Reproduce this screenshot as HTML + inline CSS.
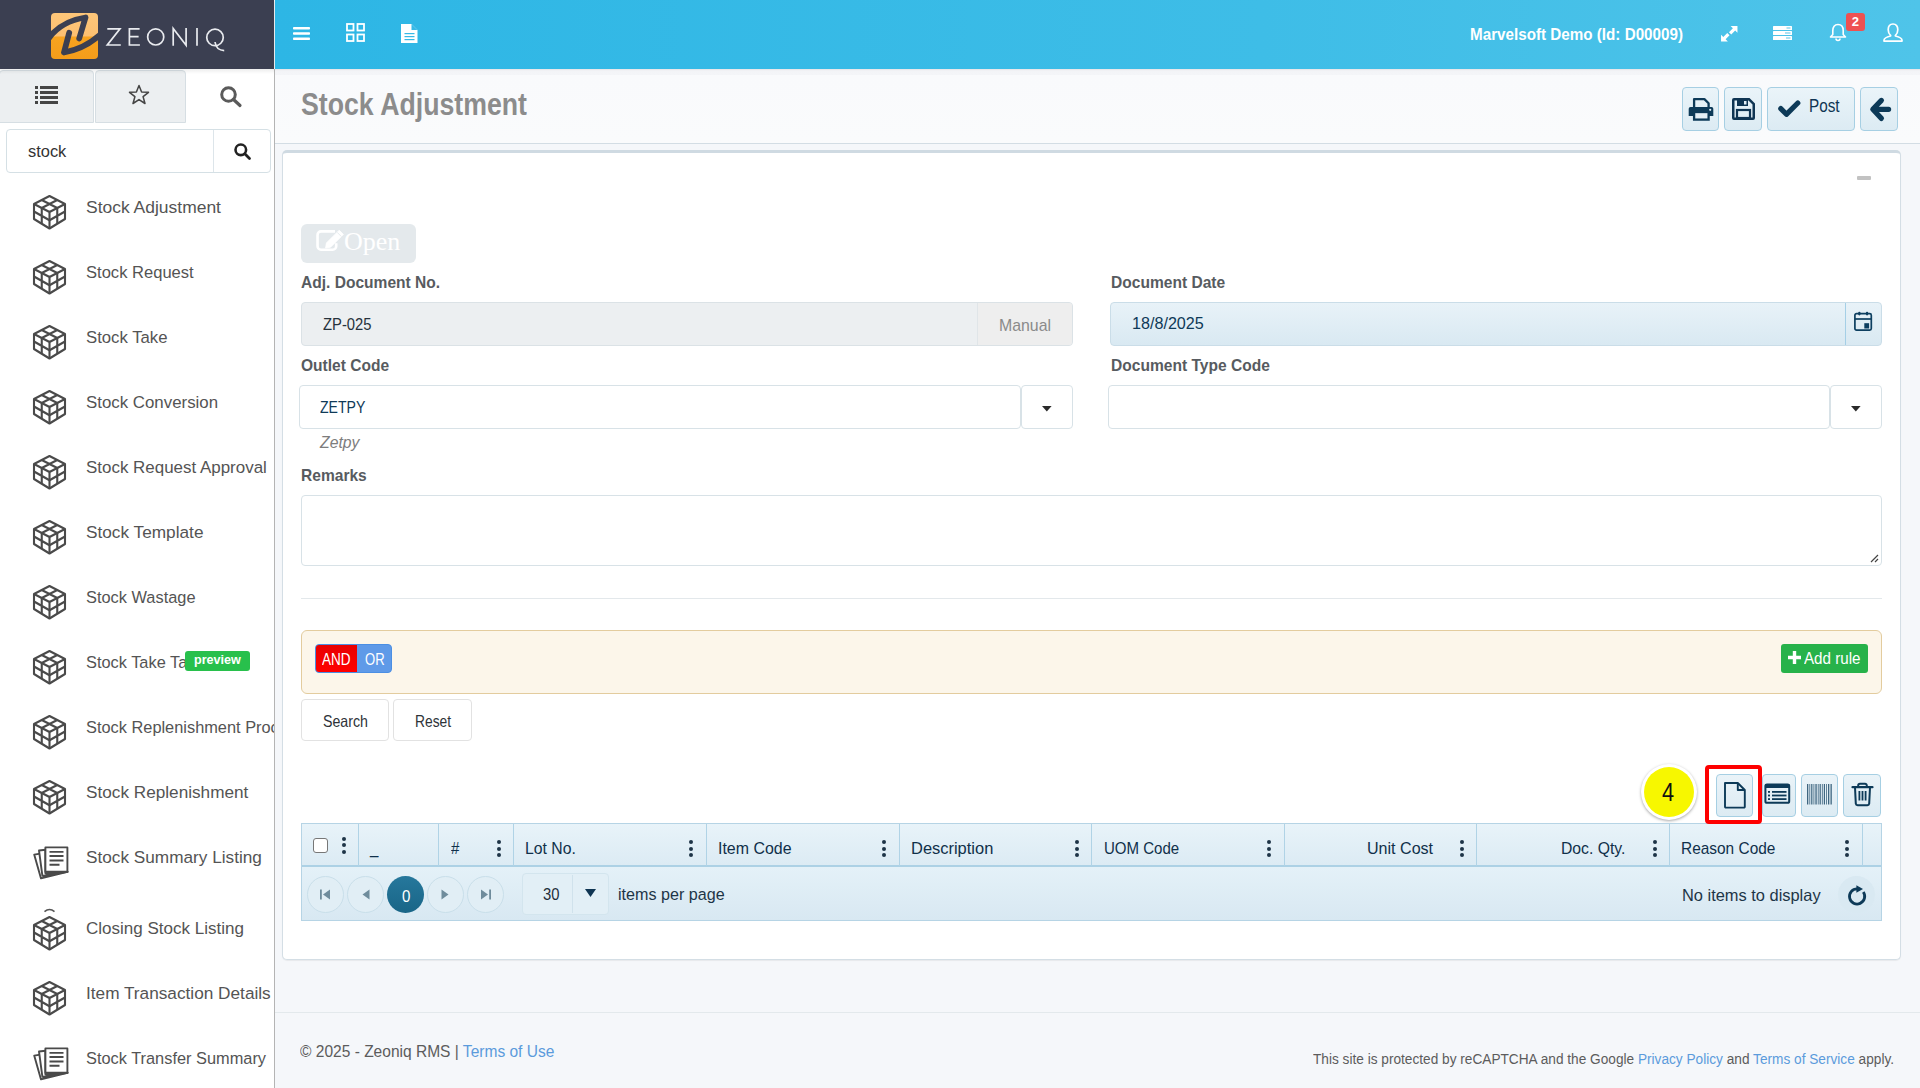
<!DOCTYPE html>
<html><head><meta charset="utf-8">
<style>
*{box-sizing:border-box;margin:0;padding:0}
html,body{width:1920px;height:1088px;overflow:hidden;background:#f5f7fa;font-family:"Liberation Sans",sans-serif;color:#333}
.a{position:absolute}
.t{position:absolute;line-height:1;white-space:nowrap}
svg{position:absolute;overflow:visible}
#side{position:absolute;left:0;top:0;width:274px;height:1088px;background:#fff;overflow:hidden}
#sideline{position:absolute;left:274px;top:69px;width:1px;height:1019px;background:#b4b4b4}
#logo{position:absolute;left:0;top:0;width:275px;height:69px;background:#3b3f51;z-index:3}
.tab{position:absolute;top:69.5px;height:53.5px;background:#eceff1;border:1px solid #d6dee3;border-radius:4px 4px 0 0}
.mi{position:absolute;left:86px;font-size:17.5px;color:#545454}
#top{position:absolute;left:275px;top:0;width:1645px;height:69px;background:linear-gradient(90deg,#2db6e5 0%,#3ebde7 60%,#4fc4e9 100%);box-shadow:0 1px 3px rgba(0,0,0,.15)}
#tbar{position:absolute;left:275px;top:69px;width:1645px;height:75px;background:linear-gradient(#e4e1e4 0,#eeeef1 1px,#f3f4f7 2px,#f4f5f8 6px,#f9fafc 6.5px,#fafbfc 100%);border-bottom:1px solid #d3dde4}
.hb{position:absolute;top:87px;height:44px;background:linear-gradient(#eaf4f9,#dcebf3);border:1px solid #a6cfe3;border-radius:4px}
#card{position:absolute;left:282px;top:150px;width:1619px;height:810px;box-shadow:0 1px 1px rgba(0,0,0,.06);background:#fff;border:1px solid #d4dee5;border-top:3px solid #cfdae2;border-radius:5px}
.lbl{position:absolute;font-size:15.5px;font-weight:700;color:#575b60;line-height:1;white-space:nowrap}
.inp{position:absolute;height:44px;border:1px solid #d8e2e7;border-radius:4px;background:#fff}
.gh{position:absolute;top:824px;height:43px;border-right:1px solid #b9d6e6}
.dots{position:absolute;width:4px;height:18px}
.dots i{position:absolute;left:0;width:4px;height:4px;border-radius:2px;background:#1e3447}
.ght{position:absolute;font-size:16px;color:#2b3b47;line-height:1;white-space:nowrap}
.pc{position:absolute;top:876px;width:37px;height:37px;border-radius:50%;border:1px solid #c9dfea;background:#e1eef5}
.tb{position:absolute;top:774px;height:42.5px;border:1px solid #a6cfe3;border-radius:4px;background:linear-gradient(#eaf3f8,#dcebf3)}
.ft{position:absolute;line-height:1;white-space:nowrap;color:#5c5c5c}
.lnk{color:#5b9bdc}
</style></head><body>

<!-- SIDEBAR -->
<div id="side">
  <div id="logo">
    <svg style="left:51px;top:13px" width="47" height="46" viewBox="0 0 47 46">
      <defs><linearGradient id="lg" x1="0" y1="0" x2="0" y2="1"><stop offset="0" stop-color="#fdc679"/><stop offset=".49" stop-color="#fcc072"/><stop offset=".53" stop-color="#f7a320"/><stop offset="1" stop-color="#f59d1a"/></linearGradient><clipPath id="lc"><rect x="0" y="0" width="47" height="46" rx="4"/></clipPath></defs>
      <rect x="0" y="0" width="47" height="46" rx="4" fill="url(#lg)"/>
      <g clip-path="url(#lc)" fill="none" stroke="#3b3f51" stroke-width="5.8" stroke-linejoin="round" stroke-linecap="round"><path d="M-2 25 C6 14 18 7 34.5 4.5 L28.2 25.5"/><path d="M18.2 19.8 L13 39.5 C25 37.5 38 32 50 21"/></g>
    </svg>
    <svg style="left:0;top:0" width="274" height="69" viewBox="0 0 274 69"><g fill="none" stroke="#e9ebef" stroke-width="1.7"><path d="M107.3 28.9 H120 L107.3 45 H120.8"/><path d="M139.6 28.9 H129.4 V45 H139.9 M129.4 36.6 H138.6"/><circle cx="155.7" cy="36.95" r="8.05"/><path d="M173.2 45.8 V28.6 L186.1 45.3 V28.1"/><path d="M197 28.1 V45.8"/><circle cx="215" cy="37.4" r="8.25"/><path d="M215 42 Q216.2 50.3 224.2 50.6"/></g></svg>
  </div>
  <div class="tab" style="left:-1px;width:94.5px"></div>
  <div class="tab" style="left:94.5px;width:91.5px"></div>
  <!-- list icon -->
  <svg style="left:35px;top:86px" width="23" height="18" viewBox="0 0 23 18"><g fill="#454545"><rect x="0" y="0" width="3" height="3"/><rect x="5" y="0" width="18" height="3"/><rect x="0" y="5" width="3" height="3"/><rect x="5" y="5" width="18" height="3"/><rect x="0" y="10" width="3" height="3"/><rect x="5" y="10" width="18" height="3"/><rect x="0" y="15" width="3" height="3"/><rect x="5" y="15" width="18" height="3"/></g></svg>
  <!-- star -->
  <svg style="left:128px;top:84px" width="22" height="22" viewBox="0 0 22 22"><path d="M11 1.5 L13.6 8 L20.5 8.3 L15.1 12.7 L17 19.5 L11 15.6 L5 19.5 L6.9 12.7 L1.5 8.3 L8.4 8 Z" fill="none" stroke="#454545" stroke-width="1.5" stroke-linejoin="round"/></svg>
  <!-- search tab icon -->
  <svg style="left:220px;top:86px" width="22" height="21" viewBox="0 0 22 21"><circle cx="8.5" cy="8.5" r="6.8" fill="none" stroke="#5a5a5a" stroke-width="3"/><path d="M13.5 13.5 L20 19.5" stroke="#5a5a5a" stroke-width="3.2" stroke-linecap="round"/></svg>
  <!-- search input -->
  <div class="a" style="left:6px;top:129px;width:265px;height:44px;border:1px solid #d5e0e5;border-radius:4px;background:#fff"></div>
  <div class="a" style="left:213px;top:130px;width:1px;height:42px;background:#dde5ea"></div>
  <svg style="left:234px;top:143px" width="17" height="17" viewBox="0 0 17 17"><circle cx="6.8" cy="6.8" r="5.3" fill="none" stroke="#222" stroke-width="2.6"/><path d="M10.8 10.8 L15.5 15.5" stroke="#222" stroke-width="2.8" stroke-linecap="round"/></svg>
  <svg style="left:33px;top:194.9px" width="33" height="35" viewBox="0 0 33 35"><g fill="none" stroke="#4a4a4a" stroke-width="2.1" stroke-linejoin="round"><path d="M16.5 1 L32 9 V24 L16.5 33.5 L1 24 V9 Z"/><path d="M1 9 L16.5 17 L32 9 M16.5 17 V33.5"/><path d="M8.75 5 L24.25 13 M24.25 5 L8.75 13"/><path d="M8.75 13 V28.75 M1 16.5 L16.5 25.25"/><path d="M24.25 13 V28.75 M32 16.5 L16.5 25.25"/></g></svg>
<svg style="left:33px;top:259.9px" width="33" height="35" viewBox="0 0 33 35"><g fill="none" stroke="#4a4a4a" stroke-width="2.1" stroke-linejoin="round"><path d="M16.5 1 L32 9 V24 L16.5 33.5 L1 24 V9 Z"/><path d="M1 9 L16.5 17 L32 9 M16.5 17 V33.5"/><path d="M8.75 5 L24.25 13 M24.25 5 L8.75 13"/><path d="M8.75 13 V28.75 M1 16.5 L16.5 25.25"/><path d="M24.25 13 V28.75 M32 16.5 L16.5 25.25"/></g></svg>
<svg style="left:33px;top:324.9px" width="33" height="35" viewBox="0 0 33 35"><g fill="none" stroke="#4a4a4a" stroke-width="2.1" stroke-linejoin="round"><path d="M16.5 1 L32 9 V24 L16.5 33.5 L1 24 V9 Z"/><path d="M1 9 L16.5 17 L32 9 M16.5 17 V33.5"/><path d="M8.75 5 L24.25 13 M24.25 5 L8.75 13"/><path d="M8.75 13 V28.75 M1 16.5 L16.5 25.25"/><path d="M24.25 13 V28.75 M32 16.5 L16.5 25.25"/></g></svg>
<svg style="left:33px;top:389.9px" width="33" height="35" viewBox="0 0 33 35"><g fill="none" stroke="#4a4a4a" stroke-width="2.1" stroke-linejoin="round"><path d="M16.5 1 L32 9 V24 L16.5 33.5 L1 24 V9 Z"/><path d="M1 9 L16.5 17 L32 9 M16.5 17 V33.5"/><path d="M8.75 5 L24.25 13 M24.25 5 L8.75 13"/><path d="M8.75 13 V28.75 M1 16.5 L16.5 25.25"/><path d="M24.25 13 V28.75 M32 16.5 L16.5 25.25"/></g></svg>
<svg style="left:33px;top:454.9px" width="33" height="35" viewBox="0 0 33 35"><g fill="none" stroke="#4a4a4a" stroke-width="2.1" stroke-linejoin="round"><path d="M16.5 1 L32 9 V24 L16.5 33.5 L1 24 V9 Z"/><path d="M1 9 L16.5 17 L32 9 M16.5 17 V33.5"/><path d="M8.75 5 L24.25 13 M24.25 5 L8.75 13"/><path d="M8.75 13 V28.75 M1 16.5 L16.5 25.25"/><path d="M24.25 13 V28.75 M32 16.5 L16.5 25.25"/></g></svg>
<svg style="left:33px;top:519.9px" width="33" height="35" viewBox="0 0 33 35"><g fill="none" stroke="#4a4a4a" stroke-width="2.1" stroke-linejoin="round"><path d="M16.5 1 L32 9 V24 L16.5 33.5 L1 24 V9 Z"/><path d="M1 9 L16.5 17 L32 9 M16.5 17 V33.5"/><path d="M8.75 5 L24.25 13 M24.25 5 L8.75 13"/><path d="M8.75 13 V28.75 M1 16.5 L16.5 25.25"/><path d="M24.25 13 V28.75 M32 16.5 L16.5 25.25"/></g></svg>
<svg style="left:33px;top:584.9px" width="33" height="35" viewBox="0 0 33 35"><g fill="none" stroke="#4a4a4a" stroke-width="2.1" stroke-linejoin="round"><path d="M16.5 1 L32 9 V24 L16.5 33.5 L1 24 V9 Z"/><path d="M1 9 L16.5 17 L32 9 M16.5 17 V33.5"/><path d="M8.75 5 L24.25 13 M24.25 5 L8.75 13"/><path d="M8.75 13 V28.75 M1 16.5 L16.5 25.25"/><path d="M24.25 13 V28.75 M32 16.5 L16.5 25.25"/></g></svg>
<svg style="left:33px;top:649.9px" width="33" height="35" viewBox="0 0 33 35"><g fill="none" stroke="#4a4a4a" stroke-width="2.1" stroke-linejoin="round"><path d="M16.5 1 L32 9 V24 L16.5 33.5 L1 24 V9 Z"/><path d="M1 9 L16.5 17 L32 9 M16.5 17 V33.5"/><path d="M8.75 5 L24.25 13 M24.25 5 L8.75 13"/><path d="M8.75 13 V28.75 M1 16.5 L16.5 25.25"/><path d="M24.25 13 V28.75 M32 16.5 L16.5 25.25"/></g></svg>
<svg style="left:33px;top:714.9px" width="33" height="35" viewBox="0 0 33 35"><g fill="none" stroke="#4a4a4a" stroke-width="2.1" stroke-linejoin="round"><path d="M16.5 1 L32 9 V24 L16.5 33.5 L1 24 V9 Z"/><path d="M1 9 L16.5 17 L32 9 M16.5 17 V33.5"/><path d="M8.75 5 L24.25 13 M24.25 5 L8.75 13"/><path d="M8.75 13 V28.75 M1 16.5 L16.5 25.25"/><path d="M24.25 13 V28.75 M32 16.5 L16.5 25.25"/></g></svg>
<svg style="left:33px;top:779.9px" width="33" height="35" viewBox="0 0 33 35"><g fill="none" stroke="#4a4a4a" stroke-width="2.1" stroke-linejoin="round"><path d="M16.5 1 L32 9 V24 L16.5 33.5 L1 24 V9 Z"/><path d="M1 9 L16.5 17 L32 9 M16.5 17 V33.5"/><path d="M8.75 5 L24.25 13 M24.25 5 L8.75 13"/><path d="M8.75 13 V28.75 M1 16.5 L16.5 25.25"/><path d="M24.25 13 V28.75 M32 16.5 L16.5 25.25"/></g></svg>
<svg style="left:33px;top:845.9px" width="36" height="34" viewBox="0 0 36 34"><g fill="#fff" stroke="#4a4a4a" stroke-width="1.9" stroke-linejoin="round"><path d="M1.2 8.6 L7.2 7.6 L10.5 30 L34.5 25.8 L8 32.4 Z"/><path d="M6 4.5 L12.4 3.7 V27.2 L34.5 25.8 L9.4 29.9 Z"/><rect x="12.4" y="1.4" width="22" height="24.4"/></g><g stroke="#4a4a4a" stroke-width="1.9"><path d="M16.5 5.9 H30.5 M16.5 10 H30.5 M16.5 14.5 H30.5 M16.5 18.8 H26.5"/></g></svg>
<svg style="left:33px;top:915.9px" width="33" height="35" viewBox="0 0 33 35"><g fill="none" stroke="#4a4a4a" stroke-width="2.1" stroke-linejoin="round"><path d="M16.5 1 L32 9 V24 L16.5 33.5 L1 24 V9 Z"/><path d="M1 9 L16.5 17 L32 9 M16.5 17 V33.5"/><path d="M8.75 5 L24.25 13 M24.25 5 L8.75 13"/><path d="M8.75 13 V28.75 M1 16.5 L16.5 25.25"/><path d="M24.25 13 V28.75 M32 16.5 L16.5 25.25"/></g></svg>
<svg style="left:33px;top:980.9px" width="33" height="35" viewBox="0 0 33 35"><g fill="none" stroke="#4a4a4a" stroke-width="2.1" stroke-linejoin="round"><path d="M16.5 1 L32 9 V24 L16.5 33.5 L1 24 V9 Z"/><path d="M1 9 L16.5 17 L32 9 M16.5 17 V33.5"/><path d="M8.75 5 L24.25 13 M24.25 5 L8.75 13"/><path d="M8.75 13 V28.75 M1 16.5 L16.5 25.25"/><path d="M24.25 13 V28.75 M32 16.5 L16.5 25.25"/></g></svg>
<svg style="left:33px;top:1046.9px" width="36" height="34" viewBox="0 0 36 34"><g fill="#fff" stroke="#4a4a4a" stroke-width="1.9" stroke-linejoin="round"><path d="M1.2 8.6 L7.2 7.6 L10.5 30 L34.5 25.8 L8 32.4 Z"/><path d="M6 4.5 L12.4 3.7 V27.2 L34.5 25.8 L9.4 29.9 Z"/><rect x="12.4" y="1.4" width="22" height="24.4"/></g><g stroke="#4a4a4a" stroke-width="1.9"><path d="M16.5 5.9 H30.5 M16.5 10 H30.5 M16.5 14.5 H30.5 M16.5 18.8 H26.5"/></g></svg>
<div class="a" style="left:185px;top:651px;width:65px;height:20px;background:#28c04c;border-radius:3px;z-index:2"></div>
<svg style="left:44px;top:908px" width="11" height="4" viewBox="0 0 11 4"><path d="M0.5 3.6 Q5.5 -0.6 10.5 3.6" fill="none" stroke="#555" stroke-width="1.6"/></svg>
<div class="t" style="top:199.98px;font-size:16.80px;font-weight:400;color:#545454;z-index:1;left:86.00px;transform-origin:0 0;transform:scaleX(1.0410);">Stock Adjustment</div>
<div class="t" style="top:264.98px;font-size:16.80px;font-weight:400;color:#545454;z-index:1;left:86.00px;transform-origin:0 0;transform:scaleX(0.9867);">Stock Request</div>
<div class="t" style="top:329.98px;font-size:16.80px;font-weight:400;color:#545454;z-index:1;left:86.00px;transform-origin:0 0;transform:scaleX(0.9968);">Stock Take</div>
<div class="t" style="top:394.98px;font-size:16.80px;font-weight:400;color:#545454;z-index:1;left:86.00px;transform-origin:0 0;transform:scaleX(1.0042);">Stock Conversion</div>
<div class="t" style="top:459.98px;font-size:16.80px;font-weight:400;color:#545454;z-index:1;left:86.00px;transform-origin:0 0;transform:scaleX(1.0096);">Stock Request Approval</div>
<div class="t" style="top:524.98px;font-size:16.80px;font-weight:400;color:#545454;z-index:1;left:86.00px;transform-origin:0 0;transform:scaleX(1.0268);">Stock Template</div>
<div class="t" style="top:589.98px;font-size:16.80px;font-weight:400;color:#545454;z-index:1;left:86.00px;transform-origin:0 0;transform:scaleX(0.9756);">Stock Wastage</div>
<div class="t" style="top:654.98px;font-size:16.80px;font-weight:400;color:#545454;z-index:1;left:86.00px;transform-origin:0 0;transform:scaleX(0.9750);">Stock Take Tag</div>
<div class="t" style="top:719.98px;font-size:16.80px;font-weight:400;color:#545454;z-index:1;left:86.00px;transform-origin:0 0;transform:scaleX(0.9750);">Stock Replenishment Process</div>
<div class="t" style="top:784.98px;font-size:16.80px;font-weight:400;color:#545454;z-index:1;left:86.00px;transform-origin:0 0;transform:scaleX(1.0238);">Stock Replenishment</div>
<div class="t" style="top:849.98px;font-size:16.80px;font-weight:400;color:#545454;z-index:1;left:86.00px;transform-origin:0 0;transform:scaleX(1.0252);">Stock Summary Listing</div>
<div class="t" style="top:920.98px;font-size:16.80px;font-weight:400;color:#545454;z-index:1;left:86.00px;transform-origin:0 0;transform:scaleX(1.0146);">Closing Stock Listing</div>
<div class="t" style="top:985.98px;font-size:16.80px;font-weight:400;color:#545454;z-index:1;left:86.00px;transform-origin:0 0;transform:scaleX(1.0262);">Item Transaction Details</div>
<div class="t" style="top:1050.98px;font-size:16.80px;font-weight:400;color:#545454;z-index:1;left:86.00px;transform-origin:0 0;transform:scaleX(0.9750);">Stock Transfer Summary</div>
<div class="t" style="top:654.42px;font-size:12.50px;font-weight:700;color:#fff;z-index:3;left:193.90px;transform-origin:0 0;transform:scaleX(1.0072);">preview</div>
</div>

<div id="sideline"></div>
<div class="a" style="left:0;top:69px;width:274px;height:5px;background:linear-gradient(rgba(0,0,0,.07),rgba(0,0,0,0));z-index:2"></div>
<!-- TOP BAR -->
<div id="top"></div>
<!-- hamburger -->
<svg style="left:293px;top:27px" width="17" height="13" viewBox="0 0 17 13"><g fill="#fff"><rect x="0" y="0" width="17" height="2.6" rx=".8"/><rect x="0" y="5.2" width="17" height="2.6" rx=".8"/><rect x="0" y="10.4" width="17" height="2.6" rx=".8"/></g></svg>
<!-- grid -->
<svg style="left:346px;top:23px" width="19" height="19" viewBox="0 0 19 19"><g fill="none" stroke="#fff" stroke-width="1.8"><rect x="1" y="1" width="6.5" height="6.5"/><rect x="11.5" y="1" width="6.5" height="6.5"/><rect x="1" y="11.5" width="6.5" height="6.5"/><rect x="11.5" y="11.5" width="6.5" height="6.5"/></g></svg>
<!-- file -->
<svg style="left:401px;top:24px" width="17" height="19" viewBox="0 0 17 19"><path d="M0 0 H10.5 L16.5 6 V19 H0 Z" fill="#fff"/><path d="M10.5 0 V6 H16.5" fill="#36b9e6"/><g fill="#36b9e6"><rect x="3.5" y="9" width="10" height="1.2"/><rect x="3.5" y="12" width="10" height="1.2"/><rect x="3.5" y="15" width="10" height="1.2"/></g></svg>

<!-- expand -->
<svg style="left:1721px;top:26px" width="16.5" height="15.5" viewBox="0 0 18 17"><g fill="#fff"><path d="M10.5 0 H18 V7.5 L15.5 5 L11.2 9.3 L8.7 6.8 L13 2.5 Z"/><path d="M7.5 17 H0 V9.5 L2.5 12 L6.8 7.7 L9.3 10.2 L5 14.5 Z"/></g></svg>
<!-- server -->
<svg style="left:1773px;top:26px" width="19" height="14" viewBox="0 0 19 14"><g fill="#fff"><rect x="0" y="0" width="19" height="4" rx=".6"/><rect x="0" y="5" width="19" height="4" rx=".6"/><rect x="0" y="10" width="19" height="4" rx=".6"/></g><g fill="#5cc6ea"><rect x="13.5" y="1.5" width="4" height="1"/><rect x="12" y="6.5" width="5.5" height="1"/><rect x="13" y="11.5" width="4.5" height="1"/></g></svg>
<!-- bell -->
<svg style="left:1829px;top:23px" width="18" height="18" viewBox="0 0 18 18"><path d="M9 1.5 C5.5 1.5 3.8 4 3.8 7.5 V11.5 L1.5 14 H16.5 L14.2 11.5 V7.5 C14.2 4 12.5 1.5 9 1.5 Z" fill="none" stroke="#fff" stroke-width="1.6" stroke-linejoin="round"/><path d="M7 15.5 A2 2 0 0 0 11 15.5" fill="none" stroke="#fff" stroke-width="1.6"/></svg>
<div class="a" style="left:1846px;top:13px;width:19px;height:18px;background:#ee5151;border-radius:3px"></div>
<!-- user -->
<svg style="left:1883px;top:23px" width="20" height="19" viewBox="0 0 20 19"><path d="M10 1 C6.6 1 5.2 3.8 5.2 6.8 C5.2 9.2 6.3 11.3 7.6 12.3 V13 C4 13.9 1 15.3 1 17.2 V18.1 H19 V17.2 C19 15.3 16 13.9 12.4 13 V12.3 C13.7 11.3 14.8 9.2 14.8 6.8 C14.8 3.8 13.4 1 10 1 Z" fill="none" stroke="#fff" stroke-width="1.7" stroke-linejoin="round"/></svg>

<!-- TITLE BAR -->
<div id="tbar"></div>
<div class="hb" style="left:1682px;width:37px"></div>
<div class="hb" style="left:1724px;width:38px"></div>
<div class="hb" style="left:1767px;width:88px"></div>
<div class="hb" style="left:1860px;width:38px"></div>
<!-- print -->
<svg style="left:1688px;top:97px" width="26" height="24" viewBox="0 0 26 24"><path d="M6.1 12 V2.1 H16.4 L20.6 6.2 V12" fill="none" stroke="#0d3a58" stroke-width="2.3" stroke-linejoin="round"/><path d="M2.5 10 H23.5 A1.8 1.8 0 0 1 25.3 11.8 V19 H0.7 V11.8 A1.8 1.8 0 0 1 2.5 10 Z" fill="#0d3a58"/><rect x="6.1" y="15" width="14.5" height="7.6" fill="#e4eff6" stroke="#0d3a58" stroke-width="2.3"/><circle cx="22.2" cy="12.8" r="1.1" fill="#e4eff6"/></svg>
<!-- save -->
<svg style="left:1732px;top:98px" width="23" height="22" viewBox="0 0 23 22"><path d="M0 2 A2 2 0 0 1 2 0 H17.5 L23 5.5 V20 A2 2 0 0 1 21 22 H2 A2 2 0 0 1 0 20 Z M2.5 2.5 V19.5 H20.5 V6.5 L16.5 2.5 Z" fill="#0f3553" fill-rule="evenodd"/><rect x="5" y="2" width="11" height="6" fill="#0f3553"/><rect x="12" y="3" width="2.5" height="3.5" fill="#e3eff6"/><rect x="5" y="12" width="13" height="8" fill="none" stroke="#0f3553" stroke-width="2.2"/></svg>
<!-- check -->
<svg style="left:1770px;top:95px" width="36" height="30" viewBox="0 0 36 30"><path d="M10.8 13.6 L16.4 19.3 L27.8 8" fill="none" stroke="#0d3a58" stroke-width="5.2" stroke-linecap="round" stroke-linejoin="round"/></svg>
<!-- back -->
<svg style="left:1860px;top:90px" width="40" height="40" viewBox="0 0 40 40"><path d="M28.6 19.3 H13 M21.4 10.4 L12.8 19.3 L21.4 28.4" fill="none" stroke="#0d3a58" stroke-width="5.2" stroke-linecap="round" stroke-linejoin="round"/></svg>

<!-- CARD -->
<div id="card"></div>
<div class="a" style="left:1857px;top:176px;width:14px;height:4px;background:#c2c2c2;border-radius:1px"></div>

<div class="a" style="left:301px;top:224px;width:115px;height:39px;background:#e4e9ec;border-radius:6px"></div>
<svg style="left:315px;top:229px" width="31" height="24" viewBox="0 0 31 24"><path d="M20 2.4 H6 A3.5 3.5 0 0 0 2.55 5.9 V17.2 A3.5 3.5 0 0 0 6 20.7 H17.7 A3.5 3.5 0 0 0 21.2 17.2 V14.2" fill="none" stroke="#fff" stroke-width="2.6"/><path d="M10.6 19 L11.4 14 L24.2 1.2 L28.4 5.4 L15.6 18.2 Z" fill="#fff" stroke="#fff" stroke-width="0.8" stroke-linejoin="round"/><path d="M22.1 3.3 L26.3 7.5" stroke="#e4e9ec" stroke-width="0.9"/></svg>

<div class="a" style="left:301px;top:302px;width:772px;height:44px;background:#eceff1;border:1px solid #dbe2e6;border-radius:4px"></div>
<div class="a" style="left:977px;top:303px;width:1px;height:42px;background:#e0e5e8"></div>
<div class="a" style="left:978px;top:303px;width:94px;height:42px;background:#eeeeee;border-radius:0 3px 3px 0"></div>

<div class="a" style="left:1110px;top:302px;width:772px;height:44px;background:linear-gradient(#e8f2f8,#d9e9f2);border:1px solid #cadde8;border-radius:4px"></div>
<div class="a" style="left:1845px;top:303px;width:1px;height:42px;background:#a5cfe6"></div>
<svg style="left:1853px;top:311px" width="20" height="21" viewBox="0 0 20 21"><rect x="1.9" y="2.7" width="16.4" height="16.4" rx="1.6" fill="none" stroke="#0d3f60" stroke-width="1.7"/><path d="M1.9 8 H18.3" stroke="#0d3f60" stroke-width="1.7"/><rect x="5.2" y="0.8" width="2.3" height="3.6" rx="1.1" fill="#0d3f60"/><rect x="12.9" y="0.8" width="2.3" height="3.6" rx="1.1" fill="#0d3f60"/><rect x="11.3" y="12.2" width="4.8" height="5.3" fill="#0d3f60"/></svg>

<div class="inp" style="left:299px;top:385px;width:722px;height:44px"></div>
<div class="inp" style="left:1021px;top:385px;width:52px;height:44px"></div>
<svg style="left:1042px;top:405.5px" width="10" height="6" viewBox="0 0 10 6"><path d="M0 0 H9.6 L4.8 5.4 Z" fill="#2a2a2a"/></svg>

<div class="inp" style="left:1108px;top:385px;width:722px;height:44px"></div>
<div class="inp" style="left:1830px;top:385px;width:52px;height:44px"></div>
<svg style="left:1851px;top:405.5px" width="10" height="6" viewBox="0 0 10 6"><path d="M0 0 H9.6 L4.8 5.4 Z" fill="#2a2a2a"/></svg>

<div class="inp" style="left:301px;top:495px;width:1581px;height:71px"></div>
<svg style="left:1869px;top:553px" width="10" height="10" viewBox="0 0 10 10"><path d="M9 2 L2 9 M9 6 L6 9" stroke="#444" stroke-width="1.2"/></svg>

<div class="a" style="left:301px;top:598px;width:1581px;height:1px;background:#e3e8eb"></div>

<!-- filter builder -->
<div class="a" style="left:301px;top:630px;width:1581px;height:64px;background:#fcf6ea;border:1px solid #e3cc9e;border-radius:6px"></div>
<div class="a" style="left:315px;top:644px;width:77px;height:29px;background:#5f9ae8;border-radius:4px;border:1px solid #4b8fe4;overflow:hidden"><div class="a" style="left:0;top:0;width:41px;height:27px;background:linear-gradient(#e80000,#ff0000)"></div></div>

<div class="a" style="left:1781px;top:644px;width:87px;height:29px;background:#27b24a;border-radius:3px"></div>
<svg style="left:1788px;top:651px" width="13" height="13" viewBox="0 0 13 13"><path d="M4.8 0 H8.2 V4.8 H13 V8.2 H8.2 V13 H4.8 V8.2 H0 V4.8 H4.8 Z" fill="#fff"/></svg>

<div class="a" style="left:301px;top:699px;width:88px;height:42px;background:#fff;border:1px solid #e2e2e2;border-radius:4px"></div>
<div class="a" style="left:393px;top:699px;width:79px;height:42px;background:#fff;border:1px solid #e2e2e2;border-radius:4px"></div>

<!-- toolbar -->
<div class="a" style="left:1641px;top:764px;width:56px;height:56px;border-radius:50%;background:#fff;box-shadow:0 1px 3px rgba(0,0,0,.35)"></div>
<div class="a" style="left:1644px;top:767px;width:50px;height:50px;border-radius:50%;background:#f7f700"></div>
<div class="tb" style="left:1716px;width:37px"></div>
<div class="tb" style="left:1762px;width:34px"></div>
<div class="tb" style="left:1801px;width:37px"></div>
<div class="tb" style="left:1843px;width:38px"></div>
<div class="a" style="left:1705px;top:764.5px;width:57px;height:59.5px;border:4.5px solid #fe0000;border-radius:4px;z-index:5"></div>
<!-- new doc -->
<svg style="left:1723px;top:781px" width="24" height="28" viewBox="0 0 24 28"><path d="M2 2 H14.8 L21.8 9 V25.8 A0.8 0.8 0 0 1 21 26.6 H2.8 A0.8 0.8 0 0 1 2 25.8 Z" fill="none" stroke="#0d3a58" stroke-width="1.9" stroke-linejoin="round"/><path d="M14.8 2 V9 H21.8" fill="none" stroke="#0d3a58" stroke-width="1.9" stroke-linejoin="round"/></svg>
<!-- list -->
<svg style="left:1764px;top:783px" width="27" height="22" viewBox="0 0 27 22"><rect x="1.4" y="1.4" width="23.8" height="18.4" rx="1.6" fill="none" stroke="#0d3a58" stroke-width="2"/><rect x="1" y="1" width="24.6" height="4" rx="1" fill="#0d3a58"/><g fill="#0d3a58"><rect x="4" y="8" width="2" height="1.8"/><rect x="8" y="8" width="14.5" height="1.8"/><rect x="4" y="11.6" width="2" height="1.8"/><rect x="8" y="11.6" width="14.5" height="1.8"/><rect x="4" y="15.2" width="2" height="1.8"/><rect x="8" y="15.2" width="14.5" height="1.8"/></g></svg>
<!-- barcode -->
<svg style="left:1807px;top:783.5px" width="25" height="20.5" viewBox="0 0 25 20.5"><g fill="#3f6680"><rect x="0" y="0" width="1.3" height="20.5"/><rect x="2.4" y="0" width="0.8" height="20.5"/><rect x="4.2" y="0" width="1.2" height="20.5"/><rect x="6.5" y="0" width="0.8" height="20.5"/><rect x="8.4" y="0" width="1.3" height="20.5"/><rect x="10.8" y="0" width="0.8" height="20.5"/><rect x="12.6" y="0" width="1.2" height="20.5"/><rect x="14.9" y="0" width="0.8" height="20.5"/><rect x="16.8" y="0" width="1.2" height="20.5"/><rect x="19" y="0" width="0.8" height="20.5"/><rect x="21" y="0" width="1.3" height="20.5"/><rect x="23.5" y="0" width="1.3" height="20.5"/></g></svg>
<!-- trash -->
<svg style="left:1851px;top:782px" width="23" height="25" viewBox="0 0 23 25"><path d="M1.5 5.2 H21.5" stroke="#0d3a58" stroke-width="2.2" stroke-linecap="round"/><path d="M7.2 5 V3.6 A1.8 1.8 0 0 1 9 1.8 H14 A1.8 1.8 0 0 1 15.8 3.6 V5" fill="none" stroke="#0d3a58" stroke-width="2"/><path d="M4 5.5 L4.8 21.6 A1.8 1.8 0 0 0 6.6 23.2 H16.4 A1.8 1.8 0 0 0 18.2 21.6 L19 5.5" fill="none" stroke="#0d3a58" stroke-width="2"/><g fill="#0d3a58"><rect x="7.5" y="9" width="1.8" height="9.5"/><rect x="10.6" y="9" width="1.8" height="9.5"/><rect x="13.7" y="9" width="1.8" height="9.5"/></g></svg>

<!-- GRID -->
<div class="a" style="left:301px;top:823px;width:1581px;height:98px;border:1px solid #b6d4e5;background:linear-gradient(#e4f1f8 45%,#d8e8f2 100%)"></div>
<div class="a" style="left:302px;top:824px;width:1579px;height:43px;background:linear-gradient(#e8f3f9,#dcebf4);border-bottom:2px solid #acd1e5"></div>
<div class="a" style="left:358px;top:824px;width:1px;height:42px;background:#b0d3e6"></div>
<div class="a" style="left:438px;top:824px;width:1px;height:42px;background:#b0d3e6"></div>
<div class="a" style="left:513px;top:824px;width:1px;height:42px;background:#b0d3e6"></div>
<div class="a" style="left:706px;top:824px;width:1px;height:42px;background:#b0d3e6"></div>
<div class="a" style="left:899px;top:824px;width:1px;height:42px;background:#b0d3e6"></div>
<div class="a" style="left:1091px;top:824px;width:1px;height:42px;background:#b0d3e6"></div>
<div class="a" style="left:1284px;top:824px;width:1px;height:42px;background:#b0d3e6"></div>
<div class="a" style="left:1476px;top:824px;width:1px;height:42px;background:#b0d3e6"></div>
<div class="a" style="left:1669px;top:824px;width:1px;height:42px;background:#b0d3e6"></div>
<div class="a" style="left:1862px;top:824px;width:1px;height:42px;background:#b0d3e6"></div>
<div class="dots" style="left:342.3px;top:837.2px"><i style="top:0"></i><i style="top:6.2px"></i><i style="top:12.4px"></i></div>
<div class="dots" style="left:497.2px;top:840.4px"><i style="top:0"></i><i style="top:6.2px"></i><i style="top:12.4px"></i></div>
<div class="dots" style="left:689.2px;top:840.4px"><i style="top:0"></i><i style="top:6.2px"></i><i style="top:12.4px"></i></div>
<div class="dots" style="left:882.2px;top:840.4px"><i style="top:0"></i><i style="top:6.2px"></i><i style="top:12.4px"></i></div>
<div class="dots" style="left:1075.2px;top:840.4px"><i style="top:0"></i><i style="top:6.2px"></i><i style="top:12.4px"></i></div>
<div class="dots" style="left:1267.2px;top:840.4px"><i style="top:0"></i><i style="top:6.2px"></i><i style="top:12.4px"></i></div>
<div class="dots" style="left:1460.2px;top:840.4px"><i style="top:0"></i><i style="top:6.2px"></i><i style="top:12.4px"></i></div>
<div class="dots" style="left:1653.2px;top:840.4px"><i style="top:0"></i><i style="top:6.2px"></i><i style="top:12.4px"></i></div>
<div class="dots" style="left:1845.2px;top:840.4px"><i style="top:0"></i><i style="top:6.2px"></i><i style="top:12.4px"></i></div>
<div class="a" style="left:313px;top:838px;width:15px;height:15px;background:#fff;border:1px solid #777;border-radius:3px"></div>

<!-- pager -->
<div class="pc" style="left:307px"></div>
<div class="pc" style="left:347px"></div>
<div class="a" style="left:387px;top:876px;width:37px;height:37px;border-radius:50%;background:linear-gradient(#26789c,#196587)"></div>
<div class="pc" style="left:427px"></div>
<div class="pc" style="left:467px"></div>
<svg style="left:320px;top:889px" width="11" height="11" viewBox="0 0 11 11"><g fill="#6f8c9c"><rect x="0" y="0.5" width="1.8" height="10"/><path d="M10 0.5 V10.5 L3 5.5 Z"/></g></svg>
<svg style="left:362px;top:889px" width="8" height="11" viewBox="0 0 8 11"><path d="M7.5 0.5 V10.5 L0.5 5.5 Z" fill="#6f8c9c"/></svg>
<svg style="left:441px;top:889px" width="8" height="11" viewBox="0 0 8 11"><path d="M0.5 0.5 V10.5 L7.5 5.5 Z" fill="#6f8c9c"/></svg>
<svg style="left:480px;top:889px" width="11" height="11" viewBox="0 0 11 11"><g fill="#6f8c9c"><rect x="9.2" y="0.5" width="1.8" height="10"/><path d="M1 0.5 V10.5 L8 5.5 Z"/></g></svg>
<div class="a" style="left:522px;top:873px;width:87px;height:42px;border:1px solid #d3e5ee;border-radius:4px;background:#e2eff6"></div>
<div class="a" style="left:572px;top:875px;width:1px;height:38px;background:#d0e2ec"></div>
<svg style="left:585px;top:889px" width="11" height="8" viewBox="0 0 11 8"><path d="M0 0 H11 L5.5 8 Z" fill="#0f3553"/></svg>
<div class="a" style="left:1838px;top:876px;width:37px;height:37px;border-radius:50%;background:#d9e9f2"></div>
<svg style="left:1847px;top:885px" width="20" height="22" viewBox="0 0 20 22"><path d="M10.1 3.8 A7.6 7.6 0 1 0 16.3 7.0" fill="none" stroke="#0d3a58" stroke-width="2.8"/><path d="M9.4 0.2 L9.4 7.7 L16 3.9 Z" fill="#0d3a58"/></svg>

<!-- FOOTER -->
<div class="a" style="left:275px;top:1012px;width:1645px;height:1px;background:#e3e9ec"></div>

<div class="t" style="top:839.78px;font-size:17.15px;font-weight:400;color:#10304a;left:370.40px;transform-origin:0 0;transform:scaleX(0.8771);">_</div>
<div class="t" style="top:839.78px;font-size:17.15px;font-weight:400;color:#10304a;left:450.50px;transform-origin:0 0;transform:scaleX(0.8771);">#</div>
<div class="t" style="top:839.78px;font-size:17.15px;font-weight:400;color:#10304a;left:525.30px;transform-origin:0 0;transform:scaleX(0.9192);">Lot No.</div>
<div class="t" style="top:839.78px;font-size:17.15px;font-weight:400;color:#10304a;left:717.80px;transform-origin:0 0;transform:scaleX(0.9295);">Item Code</div>
<div class="t" style="top:839.78px;font-size:17.15px;font-weight:400;color:#10304a;left:910.90px;transform-origin:0 0;transform:scaleX(0.9598);">Description</div>
<div class="t" style="top:839.78px;font-size:17.15px;font-weight:400;color:#10304a;left:1103.90px;transform-origin:0 0;transform:scaleX(0.8771);">UOM Code</div>
<div class="t" style="top:839.78px;font-size:17.15px;font-weight:400;color:#10304a;left:1367.00px;transform-origin:0 0;transform:scaleX(0.9376);">Unit Cost</div>
<div class="t" style="top:839.78px;font-size:17.15px;font-weight:400;color:#10304a;left:1560.90px;transform-origin:0 0;transform:scaleX(0.9177);">Doc. Qty.</div>
<div class="t" style="top:839.78px;font-size:17.15px;font-weight:400;color:#10304a;left:1681.20px;transform-origin:0 0;transform:scaleX(0.9005);">Reason Code</div>
<div class="t" style="top:25.66px;font-size:17.30px;font-weight:700;color:#fff;left:1470.00px;transform-origin:0 0;transform:scaleX(0.8801);">Marvelsoft Demo (Id: D00009)</div>
<div class="t" style="top:142.72px;font-size:17.10px;font-weight:400;color:#333;left:27.80px;transform-origin:0 0;transform:scaleX(0.9597);">stock</div>
<div class="t" style="top:89.72px;font-size:30.81px;font-weight:700;color:#8c8c8c;left:301.00px;transform-origin:0 0;transform:scaleX(0.8670);">Stock Adjustment</div>
<div class="t" style="top:97.91px;font-size:17.59px;font-weight:400;color:#0f3553;left:1809.00px;transform-origin:0 0;transform:scaleX(0.8696);">Post</div>
<div class="t" style="top:229.39px;font-size:25.65px;font-weight:400;color:#fff;font-family:'Liberation Serif',serif;left:343.60px;transform-origin:0 0;transform:scaleX(1.0141);">Open</div>
<div class="t" style="top:273.90px;font-size:17.01px;font-weight:700;color:#575b60;left:301.00px;transform-origin:0 0;transform:scaleX(0.9154);">Adj. Document No.</div>
<div class="t" style="top:273.90px;font-size:17.01px;font-weight:700;color:#575b60;left:1110.50px;transform-origin:0 0;transform:scaleX(0.9154);">Document Date</div>
<div class="t" style="top:357.40px;font-size:17.01px;font-weight:700;color:#575b60;left:301.00px;transform-origin:0 0;transform:scaleX(0.9154);">Outlet Code</div>
<div class="t" style="top:357.40px;font-size:17.01px;font-weight:700;color:#575b60;left:1110.50px;transform-origin:0 0;transform:scaleX(0.9154);">Document Type Code</div>
<div class="t" style="top:467.10px;font-size:17.01px;font-weight:700;color:#575b60;left:301.00px;transform-origin:0 0;transform:scaleX(0.9154);">Remarks</div>
<div class="t" style="top:316.30px;font-size:16.42px;font-weight:400;color:#26323c;left:322.80px;transform-origin:0 0;transform:scaleX(0.9013);">ZP-025</div>
<div class="t" style="top:316.98px;font-size:16.21px;font-weight:400;color:#8a8a8a;left:998.70px;transform-origin:0 0;transform:scaleX(0.9794);">Manual</div>
<div class="t" style="top:314.52px;font-size:16.05px;font-weight:400;color:#0f3a58;left:1132.00px;transform-origin:0 0;transform:scaleX(1.0066);">18/8/2025</div>
<div class="t" style="top:400.45px;font-size:16.72px;font-weight:400;color:#0f3a58;left:320.30px;transform-origin:0 0;transform:scaleX(0.8432);">ZETPY</div>
<div class="t" style="top:434.93px;font-size:16.86px;font-weight:400;color:#7d7d7d;font-style:italic;left:320.00px;transform-origin:0 0;transform:scaleX(0.9366);">Zetpy</div>
<div class="t" style="top:651.51px;font-size:15.70px;font-weight:400;color:#fff;left:321.70px;transform-origin:0 0;transform:scaleX(0.8634);">AND</div>
<div class="t" style="top:651.51px;font-size:15.70px;font-weight:400;color:#fff;left:364.90px;transform-origin:0 0;transform:scaleX(0.8329);">OR</div>
<div class="t" style="top:651.15px;font-size:16.72px;font-weight:400;color:#fff;left:1804.20px;transform-origin:0 0;transform:scaleX(0.9081);">Add rule</div>
<div class="t" style="top:712.92px;font-size:16.28px;font-weight:400;color:#2e3338;left:322.50px;transform-origin:0 0;transform:scaleX(0.8730);">Search</div>
<div class="t" style="top:712.92px;font-size:16.28px;font-weight:400;color:#2e3338;left:414.80px;transform-origin:0 0;transform:scaleX(0.8494);">Reset</div>
<div class="t" style="top:779.74px;font-size:25.00px;font-weight:400;color:#111;left:1662.40px;transform-origin:0 0;transform:scaleX(0.8701);">4</div>
<div class="t" style="top:887.62px;font-size:16.05px;font-weight:400;color:#fff;left:401.60px;transform-origin:0 0;transform:scaleX(0.9415);">0</div>
<div class="t" style="top:887.07px;font-size:16.69px;font-weight:400;color:#1d2d3a;left:543.10px;transform-origin:0 0;transform:scaleX(0.8889);">30</div>
<div class="t" style="top:887.07px;font-size:16.69px;font-weight:400;color:#1d3547;left:618.10px;transform-origin:0 0;transform:scaleX(0.9657);">items per page</div>
<div class="t" style="top:887.95px;font-size:16.72px;font-weight:400;color:#1d3547;left:1681.50px;transform-origin:0 0;transform:scaleX(0.9822);">No items to display</div>
<div class="t" style="top:1042.90px;font-size:17.01px;font-weight:400;color:#5c5c5c;left:300.30px;transform-origin:0 0;transform:scaleX(0.9139);">© 2025 - Zeoniq RMS | <span class="lnk">Terms of Use</span></div>
<div class="t" style="top:1052.13px;font-size:14.08px;font-weight:400;color:#5c5c5c;left:1313.10px;transform-origin:0 0;transform:scaleX(0.9702);">This site is protected by reCAPTCHA and the Google <span class="lnk">Privacy Policy</span> and <span class="lnk">Terms of Service</span> apply.</div>
<div class="t" style="top:14.83px;font-size:13.08px;font-weight:700;color:#fff;left:1805.5px;width:100px;text-align:center;">2</div>
</body></html>
